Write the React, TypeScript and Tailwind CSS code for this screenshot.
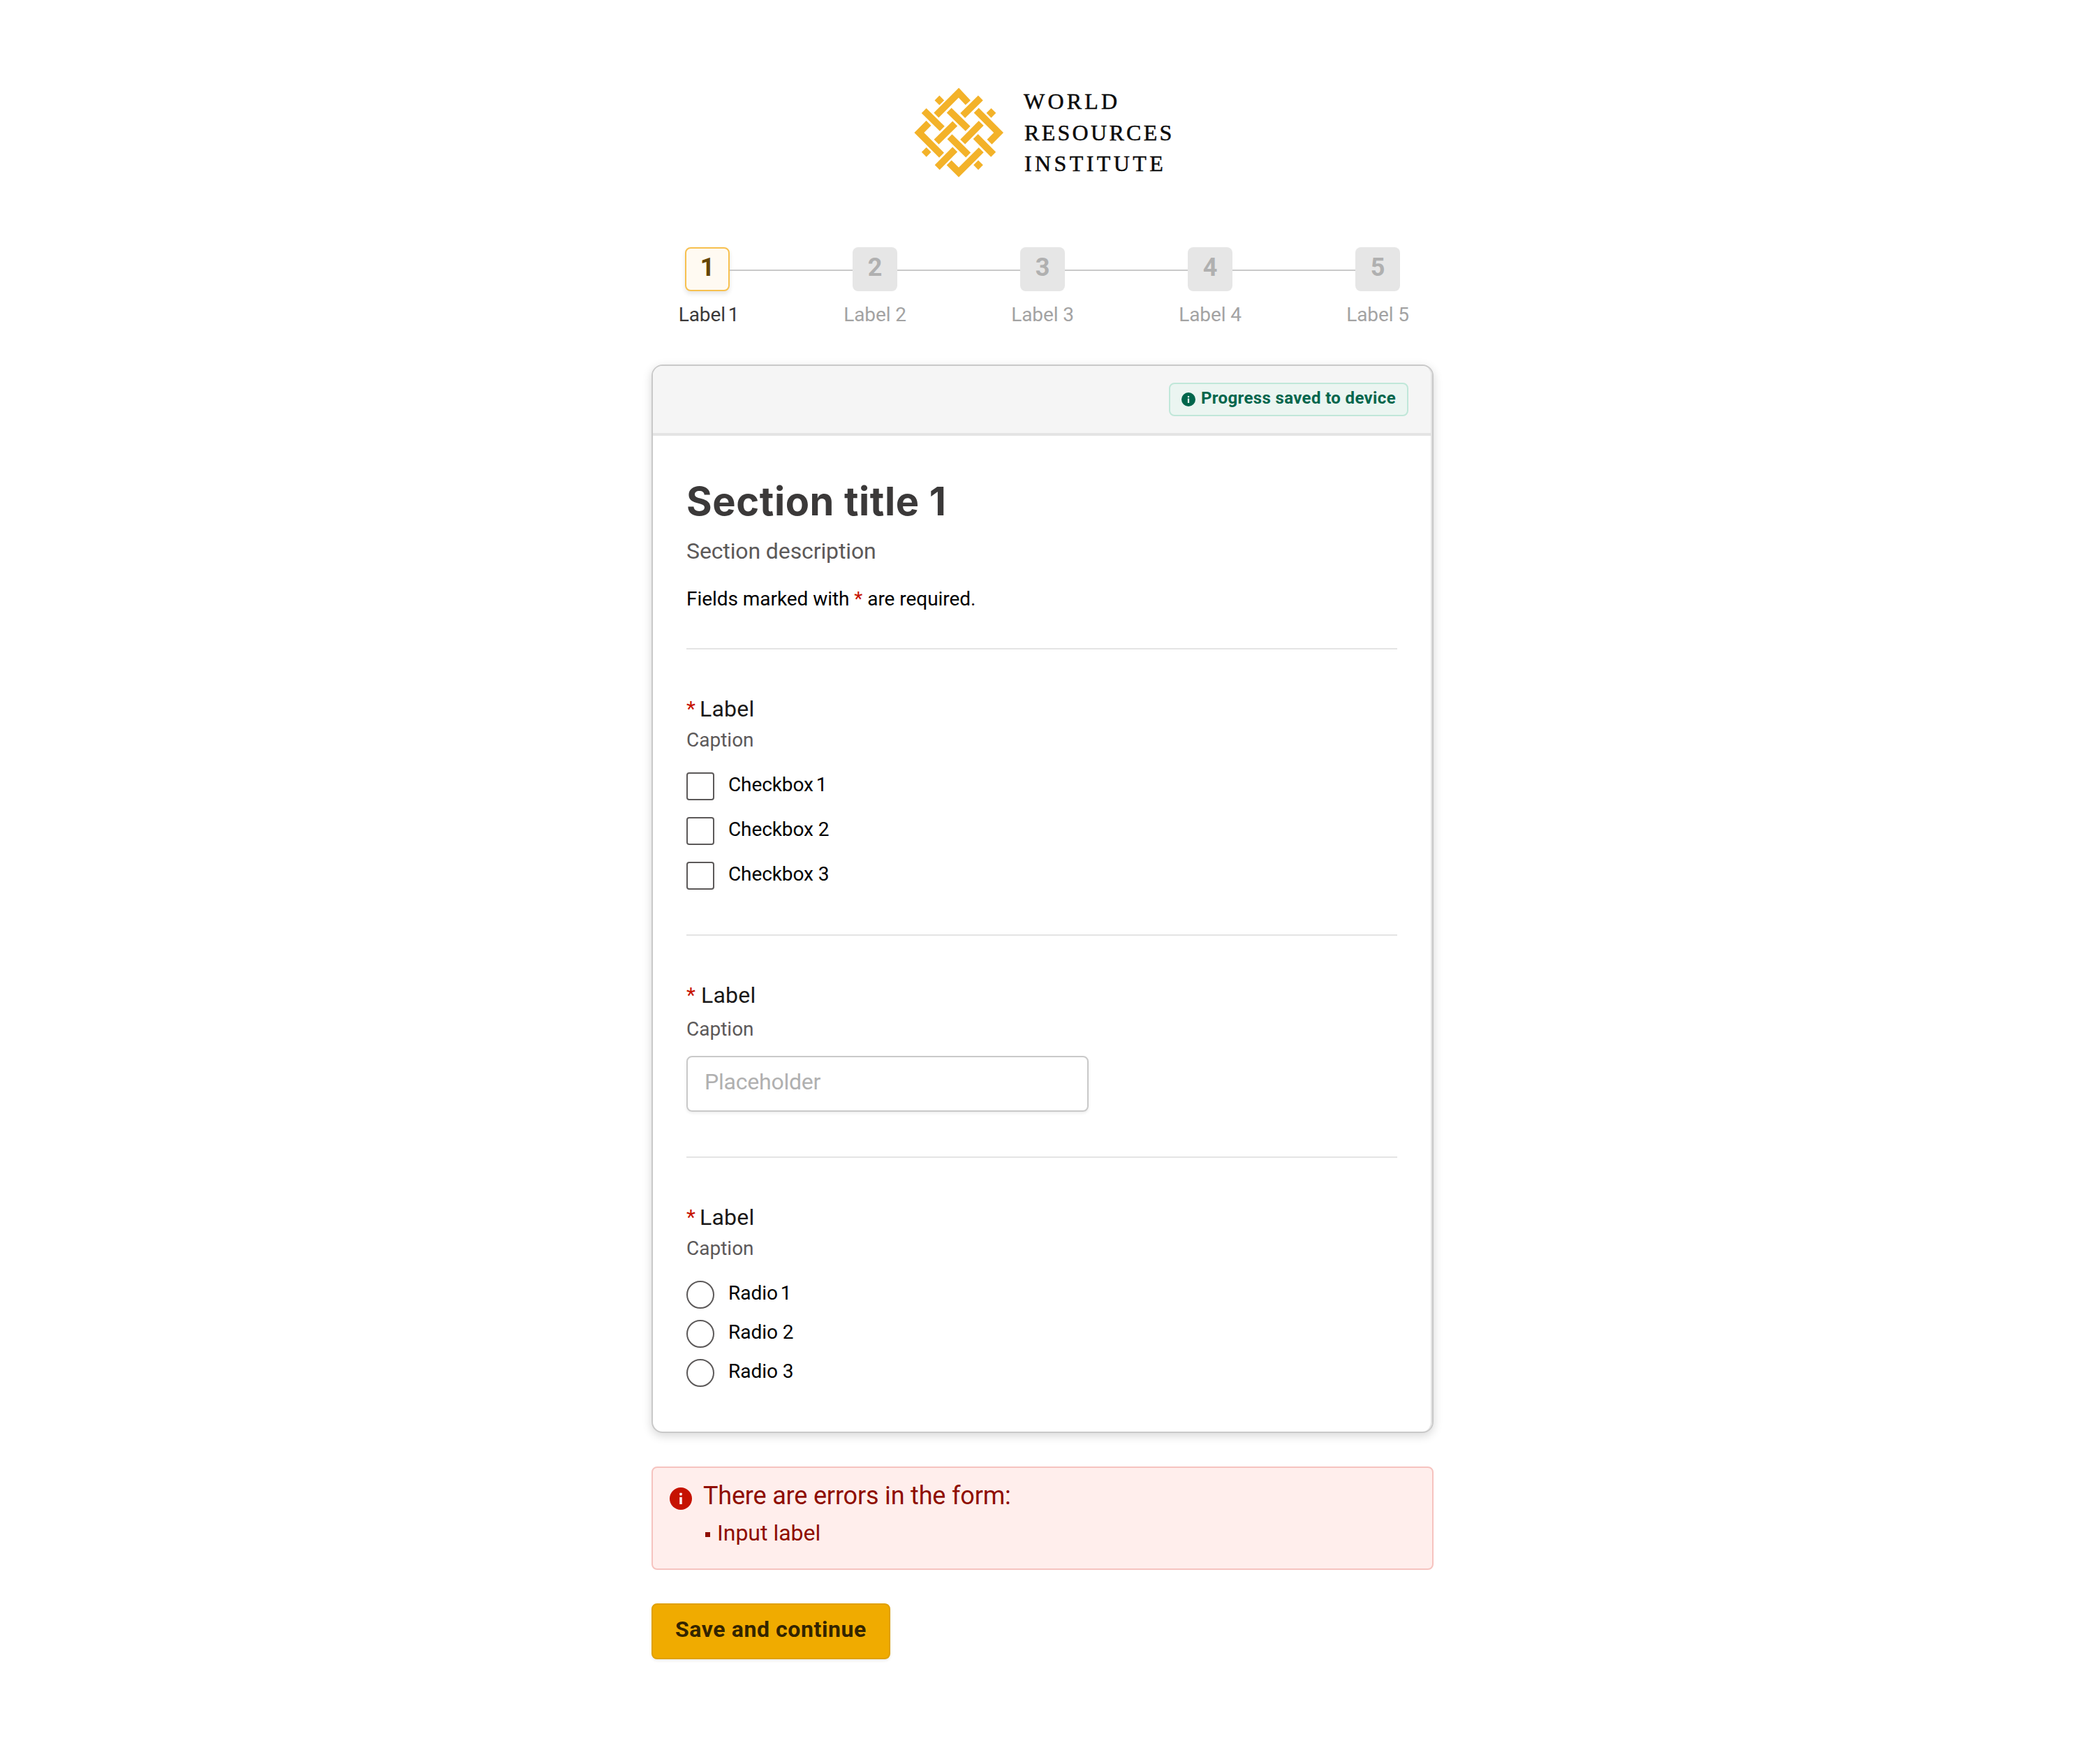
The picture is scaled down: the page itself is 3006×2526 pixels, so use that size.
import type { ReactNode } from "react";

const STEPS = [1, 2, 3, 4, 5];
const ACTIVE_STEP = 1;

function LogoMark() {
  return (
    <svg className="h-32 w-32 shrink-0" viewBox="57.5 48 383 384" fill="none" stroke="#f3b229" strokeWidth="29.5" strokeMiterlimit="10">
      <path d="M152.5 165 249 68.5 289 111" />
      <path d="M324.5 144 420.500 240 381 279.500" />
      <path d="M120 199 79 240 175.500 336.500" />
      <path d="M207.500 369 249 410.500 345.500 314" />
      <path d="M343 91 266 166.500" />
      <path d="M99.500 145.500 178 222.500" />
      <path d="M207.500 144 288.500 222.500" />
      <path d="M233 201 153 280" />
      <path d="M345.500 199 266 279.500" />
      <path d="M210 257 290 336" />
      <path d="M321.500 256.500 398 333.500" />
      <path d="M233 312 156.500 389" />
      <g fill="#f3b229" stroke="none">
        <path d="M166 80.500 186.500 101 166 121.500 145.500 101Z" />
        <path d="M388.500 135 409 155.500 388.500 176 368 155.500Z" />
        <path d="M110 303 130.500 323.500 110 344 89.500 323.500Z" />
        <path d="M333 358.500 353.500 379 333 399.500 312.500 379Z" />
      </g>
    </svg>
  );
}

function InfoIcon({ className, glyph }: { className: string; glyph: string }) {
  return (
    <svg className={className} viewBox="0 0 32 32">
      <circle cx="16" cy="16" r="16" fill="currentColor" />
      <rect x="14.200" y="7.800" width="3.600" height="3.600" rx="0.800" fill={glyph} />
      <rect x="14.200" y="13.800" width="3.600" height="10.200" fill={glyph} />
    </svg>
  );
}

function Logo() {
  return (
    <div className="ml-[376px] flex h-32 items-center">
      <LogoMark />
      <div className="ml-[29px] font-['Liberation_Serif',serif] text-[32px] leading-[44.6px] text-[#0a0a0a] [-webkit-text-stroke:0.5px_#0a0a0a]">
        <div className="tracking-[4.2px]">WORLD</div>
        <div className="pl-px tracking-[3.3px]">RESOURCES</div>
        <div className="pl-px tracking-[4.4px]">INSTITUTE</div>
      </div>
    </div>
  );
}

function Stepper() {
  return (
    <div className="mt-[100px] flex h-[115px] px-12">
      {STEPS.map((n, i) => {
        const active = n === ACTIVE_STEP;
        return (
          <div key={n} className={i === 0 ? "flex" : "flex flex-1"}>
            {i > 0 && <div className="mt-8 h-0.5 flex-1 bg-[#c9c9c9]" />}
            <div className="flex w-16 flex-col items-center">
              <div
                className={
                  active
                    ? "h-16 w-16 rounded-lg border-2 border-[#f7c04f] bg-[#fffaf2] text-center text-4xl leading-[54px] font-bold text-[#654500] shadow-[0_4px_6px_rgba(0,0,0,0.1)]"
                    : "h-16 w-16 rounded-lg bg-[#e6e6e6] text-center text-4xl leading-[58px] font-bold text-[#b0b0b0]"
                }
              >
                {n}
              </div>
              <div
                className={
                  active
                    ? "mt-4 pl-1 text-[28px] leading-9 tracking-[-0.1px] whitespace-nowrap text-[#3b3939]"
                    : "mt-4 text-[28px] leading-9 tracking-[-0.1px] whitespace-nowrap text-[#a3a3a3]"
                }
              >
                Label <Numeral n={n} />
              </div>
            </div>
          </div>
        );
      })}
    </div>
  );
}

/* The figure 1 is set closer to the word before it than the wider figures. */
function Numeral({ n }: { n: number }) {
  return <span className={n === 1 ? "-ml-[3px]" : ""}>{n}</span>;
}

function Field({ wide, children }: { wide?: boolean; children: ReactNode }) {
  return (
    <div>
      <div className="mt-[65px] flex text-[32px] leading-10 text-[#1a1919]">
        <span className={wide ? "w-[21px] text-[30px] text-[#c61200]" : "w-[19px] text-[30px] text-[#c61200]"}>*</span>
        <span className="tracking-[0.2px]">Label</span>
      </div>
      <div className={wide ? "mt-[11px] text-[28px] leading-9 text-[#5c5959]" : "mt-[7px] text-[28px] leading-9 text-[#5c5959]"}>
        Caption
      </div>
      {children}
    </div>
  );
}

function Separator({ className }: { className: string }) {
  return <div className={`h-0.5 bg-[#e4e4e4] ${className}`} />;
}

function Card() {
  return (
    <div className="mt-[52px] h-[1530px] rounded-2xl border-2 border-[#c9c9c9] bg-white shadow-[0_4px_14px_rgba(0,0,0,0.16)]">
      <div className="h-full rounded-r-[14px] border-r-2 border-[#e4e4e4]">
        <div className="flex h-[100px] items-start justify-end rounded-t-[14px] border-b-4 border-[#e4e4e4] bg-[#f5f5f5] pt-6 pr-8">
          <div className="flex h-12 w-[343px] items-start rounded-lg border-2 border-[#c0e7d9] bg-[#ebf5f1] pl-4 text-[#00664c]">
            <InfoIcon className="mt-3 h-5 w-5 shrink-0" glyph="#ebf5f1" />
            <span className="ml-2 text-2xl leading-10 font-bold tracking-[0.36px] whitespace-nowrap">Progress saved to device</span>
          </div>
        </div>
        <div className="pr-12 pl-12">
          <h1 className="mt-[61px] font-['Inter',sans-serif] text-[56px] leading-[66px] font-bold tracking-[0.6px] text-[#3b3939]">
            Section title 1
          </h1>
          <p className="mt-[18px] text-[32px] leading-10 tracking-[-0.12px] text-[#5c5959]">Section description</p>
          <p className="mt-[31px] text-[28px] leading-9 tracking-[-0.05px] text-black">
            Fields marked with <span className="text-[#c61200]">*</span> are required.
          </p>
          <Separator className="mt-[52px]" />
          <Field>
            <div className="mt-7 flex flex-col gap-6">
              {[1, 2, 3].map((n) => (
                <label key={n} className="flex h-10 items-start gap-5">
                  <span className="h-10 w-10 rounded border-2 border-[#5c5959]" />
                  <span className="text-[28px] leading-9 tracking-[-0.1px] text-black">
                    Checkbox <Numeral n={n} />
                  </span>
                </label>
              ))}
            </div>
          </Field>
          <Separator className="mt-16" />
          <Field wide>
            <input
              className="mt-5 block h-20 w-[576px] rounded-lg border-2 border-[#c9c9c9] pb-1.5 pl-6 text-[32px] tracking-[-0.22px] shadow-[0_2px_4px_rgba(0,0,0,0.08)] placeholder:text-[#b0b0b0]"
              placeholder="Placeholder"
            />
          </Field>
          <Separator className="mt-16" />
          <Field>
            <div className="mt-7 flex flex-col gap-4">
              {[1, 2, 3].map((n) => (
                <label key={n} className="flex h-10 items-start gap-5">
                  <span className="h-10 w-10 rounded-full border-2 border-[#5c5959]" />
                  <span className="text-[28px] leading-9 tracking-[-0.05px] text-black">
                    Radio <Numeral n={n} />
                  </span>
                </label>
              ))}
            </div>
          </Field>
        </div>
      </div>
    </div>
  );
}

function ErrorAlert() {
  return (
    <div className="mt-12 flex h-[148px] items-start rounded-lg border-2 border-[#f6c3bf] bg-[#ffeeec] pt-[18px] pl-6 text-[#8f0d00]">
      <InfoIcon className="mt-2.5 h-8 w-8 shrink-0 text-[#c61200]" glyph="#ffeeec" />
      <div className="ml-4">
        <div className="text-4xl leading-[44px] tracking-[-0.18px]">There are errors in the form:</div>
        <div className="mt-[11px] ml-[3px] flex items-start">
          <span className="mt-[19px] h-[7px] w-[7px] bg-[#8f0d00]" />
          <span className="ml-2.5 text-[32px] leading-10">Input label</span>
        </div>
      </div>
    </div>
  );
}

export default function App() {
  return (
    <div className="min-h-[2526px] bg-white pt-[126px] pl-[933px] font-['Roboto',sans-serif]">
      <div className="w-[1120px]">
        <Logo />
        <Stepper />
        <div className="h-px" />
        <Card />
        <ErrorAlert />
        <button className="mt-12 block h-20 w-[342px] rounded-lg border-2 border-[#e0a000] bg-[#f0ab00] pl-8 text-left align-top text-[32px] shadow-[0_2px_4px_rgba(0,0,0,0.08)]">
          <span className="block h-[76px] leading-[70px] font-bold tracking-[0.58px] whitespace-nowrap text-[#332400]">Save and continue</span>
        </button>
      </div>
    </div>
  );
}
